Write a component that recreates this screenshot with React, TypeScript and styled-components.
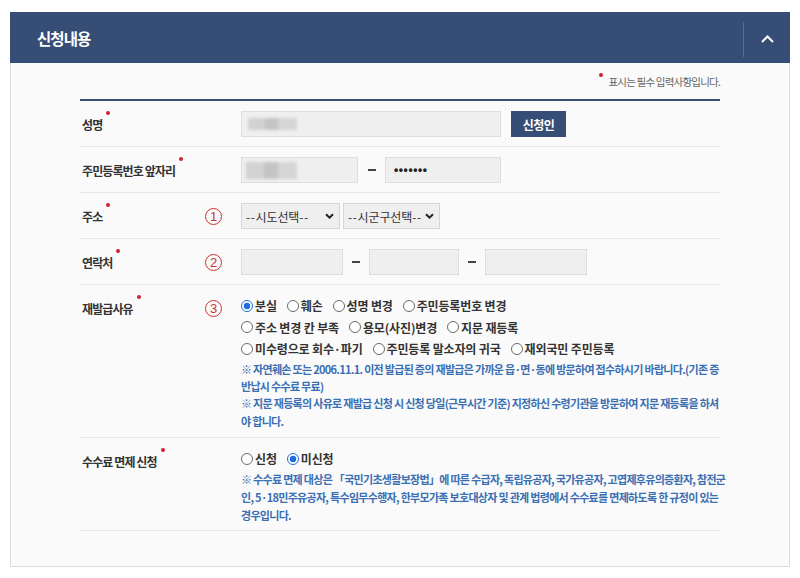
import React from 'react';
import styled, { createGlobalStyle, css } from 'styled-components';

const GlobalStyle = createGlobalStyle`
  html, body {
    margin: 0;
    padding: 0;
    background: #ffffff;
  }

  body {
    font-family: "Noto Sans CJK KR", "Noto Sans", sans-serif;
    color: #333333;
  }
`;

const NAVY = '#364d76';
const NOTE_BLUE = '#3a6fb2';

const Page = styled.div`
  padding: 12px 10px 0;
  width: 800px;
  box-sizing: border-box;
`;

const Panel = styled.section`
  width: 780px;
  height: 555px;
  box-sizing: border-box;
  border: 1px solid #dcdcdc;
  border-top: none;
  background: #fafafa;
`;

const Header = styled.header`
  height: 51px;
  margin: 0 -1px;
  background: ${NAVY};
  display: flex;
  align-items: center;
  justify-content: space-between;
`;

const Title = styled.h2`
  margin: 0 0 0 27px;
  font-size: 15.5px;
  font-weight: 700;
  letter-spacing: -0.9px;
  color: #ffffff;
`;

const Toggle = styled.button`
  width: 47px;
  height: 35px;
  margin-top: 3px;
  padding: 0;
  border: none;
  border-left: 1px solid rgba(255, 255, 255, 0.18);
  background: transparent;
  display: flex;
  align-items: center;
  justify-content: center;
  cursor: pointer;
`;

const Body = styled.div`
  padding: 0 69px;
`;

const RequiredNote = styled.p`
  margin: 0;
  height: 36px;
  display: flex;
  align-items: center;
  justify-content: flex-end;
  box-sizing: border-box;
  font-size: 10.5px;
  letter-spacing: -0.8px;
  color: #666666;
`;

const Dot = styled.span`
  display: inline-block;
  width: 4px;
  height: 4px;
  border-radius: 50%;
  background: #d0202a;
  align-self: flex-start;
`;

const NoteDot = styled(Dot)`
  margin: 10px 5px 0 0;
`;

const Form = styled.div`
  border-top: 2px solid #3b4e70;
`;

const Row = styled.div<{ $pb?: number }>`
  display: flex;
  align-items: flex-start;
  border-bottom: 1px solid #e6e6e6;
  padding: 10px 0 ${({ $pb }) => $pb ?? 9}px;
`;

const LabelCell = styled.div`
  width: 122px;
  flex-shrink: 0;
  display: flex;
  padding: 5px 0 0 2px;
  box-sizing: border-box;
  font-size: 12px;
  line-height: 18px;
`;

const Label = styled.span`
  display: inline-flex;
  font-size: 12px;
  font-weight: 700;
  line-height: 18px;
  letter-spacing: -0.9px;
  color: #333333;

  ${Dot} {
    margin: -5px 0 0 4px;
  }
`;

const NumCell = styled.div`
  width: 39px;
  flex-shrink: 0;
  display: flex;
  padding: 5px 0 0 3px;
  box-sizing: border-box;
  line-height: 17px;
`;

const Circled = styled.span`
  display: inline-flex;
  align-items: center;
  justify-content: center;
  width: 17px;
  height: 17px;
  box-sizing: border-box;
  border: 1.5px solid #c8352f;
  border-radius: 50%;
  color: #c8352f;
  font-family: "Liberation Sans", sans-serif;
  font-size: 13px;
  line-height: 1;
`;

const Content = styled.div`
  flex: 1;
  min-width: 0;
`;

const Inline = styled.div`
  display: flex;
  align-items: center;
`;

const FieldBox = styled.div<{ $w: number }>`
  width: ${({ $w }) => $w}px;
  height: 26px;
  box-sizing: border-box;
  border: 1px solid #dedede;
  background: #efefef;
  display: flex;
  align-items: center;
  padding-left: 6px;
  font-size: 12px;
  color: #222222;
`;

const Blurred = styled.span<{ $w: number; $h: number }>`
  display: inline-block;
  width: ${({ $w }) => $w}px;
  height: ${({ $h }) => $h}px;
  background: linear-gradient(90deg, #d2d2d2 0 35%, #c4c4c4 35% 62%, #d6d6d6 62% 100%);
  filter: blur(1.5px);
`;

const Masked = styled.span`
  font-family: "Liberation Sans", sans-serif;
  font-size: 12px;
  font-weight: 700;
  letter-spacing: 0.6px;
  margin-left: 2px;
`;

const Dash = styled.span<{ $gap: number }>`
  width: 8px;
  height: 2px;
  background: #444444;
  margin: 0 ${({ $gap }) => ($gap - 8) / 2}px;
`;

const NavyButton = styled.button`
  margin-left: 10px;
  width: 55px;
  height: 26px;
  border: none;
  background: ${NAVY};
  color: #ffffff;
  font-family: inherit;
  font-size: 12px;
  font-weight: 700;
  letter-spacing: -0.5px;
  cursor: pointer;
`;

const SelectBox = styled.div<{ $w: number }>`
  width: ${({ $w }) => $w}px;
  height: 26px;
  box-sizing: border-box;
  border: 1px solid #d6d6d6;
  background: #efefef;
  display: flex;
  align-items: center;
  justify-content: space-between;
  padding: 0 5px 0 4px;
  font-size: 12px;
  letter-spacing: -0.1px;
  white-space: nowrap;
  color: #333333;
`;

const SelectRow = styled(Inline)`
  gap: 3px;
`;

const Hyphens = styled.span`
  letter-spacing: 0.6px;
`;

const RadioLine = styled.div`
  display: flex;
  align-items: center;
  gap: 10px;
  height: 21.5px;
`;

const RadioItem = styled.label`
  display: inline-flex;
  align-items: center;
  font-size: 12px;
  font-weight: 700;
  letter-spacing: -0.15px;
  color: #333333;
  white-space: nowrap;
`;

const RadioMark = styled.span<{ $on?: boolean }>`
  width: 12px;
  height: 12px;
  box-sizing: border-box;
  border-radius: 50%;
  margin-right: 2px;
  background: #ffffff;
  border: 1px solid #6b6b6b;
  ${({ $on }) =>
    $on &&
    css`
      border-color: #1f6fe0;
      background: radial-gradient(circle, #1f6fe0 0 3.2px, #ffffff 3.6px);
    `}
`;

const Notes = styled.div<{ $lh: number; $mt?: number }>`
  margin-top: ${({ $mt }) => $mt ?? 0}px;
  font-size: 11px;
  font-weight: 700;
  line-height: ${({ $lh }) => $lh}px;
  letter-spacing: -0.7px;
  color: ${NOTE_BLUE};
  white-space: nowrap;
`;

const Chevron = ({ up }: { up?: boolean }) => (
  <svg width="13" height="8" viewBox="0 0 13 8">
    <polyline
      points={up ? '1,7 6.5,1.5 12,7' : '1,1 6.5,6.5 12,1'}
      fill="none"
      stroke="#ffffff"
      strokeWidth="2"
    />
  </svg>
);

const SmallCaret = () => (
  <svg width="9" height="6" viewBox="0 0 9 6">
    <polyline points="1,1.2 4.5,4.6 8,1.2" fill="none" stroke="#222" strokeWidth="2" />
  </svg>
);

const Required = ({ children }: { children: React.ReactNode }) => (
  <LabelCell>
    <Label>
      {children}
      <Dot />
    </Label>
  </LabelCell>
);

type RadioProps = { text: string; on?: boolean };

const Radio = ({ text, on }: RadioProps) => (
  <RadioItem>
    <RadioMark $on={on} />
    {text}
  </RadioItem>
);

const Select = ({ text, w }: { text: string; w: number }) => (
  <SelectBox $w={w}>
    <span>
      <Hyphens>--</Hyphens>
      {text}
      <Hyphens>--</Hyphens>
    </span>
    <SmallCaret />
  </SelectBox>
);

const reasonLines: RadioProps[][] = [
  [{ text: '분실', on: true }, { text: '훼손' }, { text: '성명 변경' }, { text: '주민등록번호 변경' }],
  [{ text: '주소 변경 칸 부족' }, { text: '용모(사진)변경' }, { text: '지문 재등록' }],
  [{ text: '미수령으로 회수·파기' }, { text: '주민등록 말소자의 귀국' }, { text: '재외국민 주민등록' }],
];

const App = () => (
  <Page>
    <GlobalStyle />
    <Panel>
      <Header>
        <Title>신청내용</Title>
        <Toggle aria-label="접기">
          <Chevron up />
        </Toggle>
      </Header>

      <Body>
        <RequiredNote>
          <NoteDot />
          표시는 필수 입력사항입니다.
        </RequiredNote>

        <Form>
          <Row>
            <Required>성명</Required>
            <NumCell />
            <Content>
              <Inline>
                <FieldBox $w={260}>
                  <Blurred $w={49} $h={12} />
                </FieldBox>
                <NavyButton>신청인</NavyButton>
              </Inline>
            </Content>
          </Row>

          <Row>
            <Required>주민등록번호 앞자리</Required>
            <NumCell />
            <Content>
              <Inline>
                <FieldBox $w={117} style={{ paddingLeft: 4 }}>
                  <Blurred $w={51} $h={17} />
                </FieldBox>
                <Dash $gap={27} />
                <FieldBox $w={116}>
                  <Masked>•••••••</Masked>
                </FieldBox>
              </Inline>
            </Content>
          </Row>

          <Row>
            <Required>주소</Required>
            <NumCell>
              <Circled>1</Circled>
            </NumCell>
            <Content>
              <SelectRow>
                <Select text="시도선택" w={99} />
                <Select text="시군구선택" w={97} />
              </SelectRow>
            </Content>
          </Row>

          <Row>
            <Required>연락처</Required>
            <NumCell>
              <Circled>2</Circled>
            </NumCell>
            <Content>
              <Inline>
                <FieldBox $w={102} />
                <Dash $gap={26} />
                <FieldBox $w={90} />
                <Dash $gap={26} />
                <FieldBox $w={102} />
              </Inline>
            </Content>
          </Row>

          <Row $pb={7}>
            <Required>재발급사유</Required>
            <NumCell>
              <Circled>3</Circled>
            </NumCell>
            <Content>
              {reasonLines.map((line, i) => (
                <RadioLine key={i}>
                  {line.map((r) => (
                    <Radio key={r.text} {...r} />
                  ))}
                </RadioLine>
              ))}
              <Notes $lh={17.4} $mt={1}>
                <div>※ 자연훼손 또는 2006.11.1. 이전 발급된 증의 재발급은 가까운 읍·면·동에 방문하여 접수하시기 바랍니다.(기존 증</div>
                <div>반납시 수수료 무료)</div>
                <div>※ 지문 재등록의 사유로 재발급 신청 시 신청 당일(근무시간 기준) 지정하신 수령기관을 방문하여 지문 재등록을 하셔</div>
                <div>야 합니다.</div>
              </Notes>
            </Content>
          </Row>

          <Row $pb={6}>
            <Required>수수료 면제 신청</Required>
            <NumCell />
            <Content>
              <RadioLine>
                <Radio text="신청" />
                <Radio text="미신청" on />
              </RadioLine>
              <Notes $lh={18}>
                <div>※ 수수료 면제 대상은 「국민기초생활보장법」에 따른 수급자, 독립유공자, 국가유공자, 고엽제후유의증환자, 참전군</div>
                <div>인, 5·18민주유공자, 특수임무수행자, 한부모가족 보호대상자 및 관계 법령에서 수수료를 면제하도록 한 규정이 있는</div>
                <div>경우입니다.</div>
              </Notes>
            </Content>
          </Row>
        </Form>
      </Body>
    </Panel>
  </Page>
);

export default App;
